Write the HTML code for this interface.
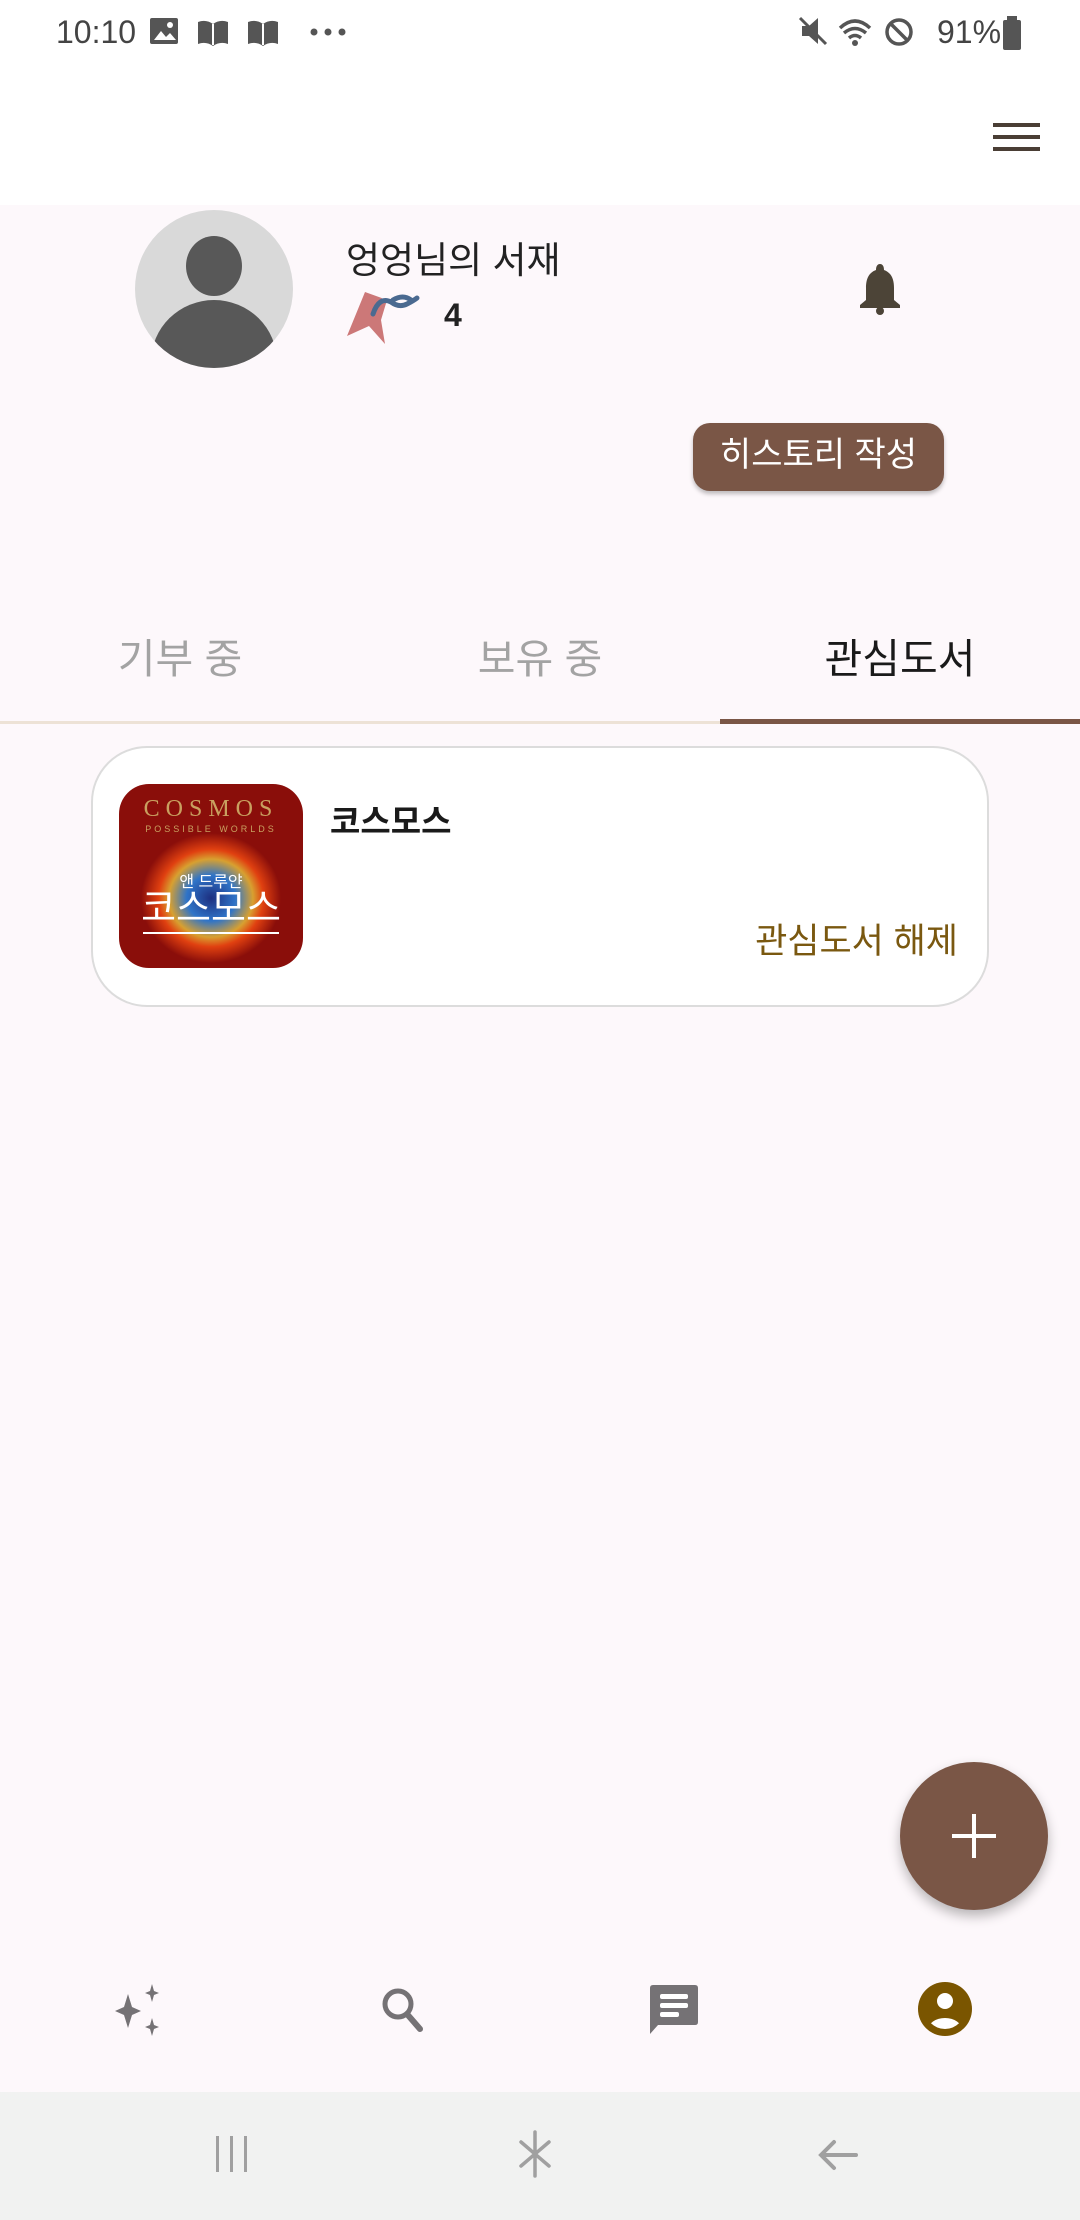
<!DOCTYPE html>
<html><head><meta charset="utf-8"><style>
*{margin:0;padding:0;box-sizing:border-box}
body{width:1080px;height:2220px;background:#fdf8fb;font-family:"Liberation Sans","Noto Sans CJK KR",sans-serif;position:relative;overflow:hidden}
.abs{position:absolute}
</style></head><body>
<div class="abs" style="left:0;top:0;width:1080px;height:205px;background:#fff"></div>
<div class="abs" style="left:56px;top:14px;font-size:32px;color:#444">10:10</div>
<svg class="abs" style="left:146px;top:14px" width="210" height="36" viewBox="0 0 210 36">
<rect x="4" y="4" width="28" height="26" rx="2" fill="#555"/><path d="M8 26l7-9 5 6 4-4 6 7z" fill="#fff"/><circle cx="24" cy="11" r="3" fill="#fff"/>
<path d="M52 8q8-3 15 2q7-5 15-2v22q-8-3-15 2q-7-5-15-2z" fill="#555"/><path d="M67 10v21" stroke="#fff" stroke-width="2"/>
<path d="M102 8q8-3 15 2q7-5 15-2v22q-8-3-15 2q-7-5-15-2z" fill="#555"/><path d="M117 10v21" stroke="#fff" stroke-width="2"/>
<circle cx="168" cy="18" r="3.5" fill="#555"/><circle cx="182" cy="18" r="3.5" fill="#555"/><circle cx="196" cy="18" r="3.5" fill="#555"/>
</svg>
<svg class="abs" style="left:796px;top:12px" width="120" height="40" viewBox="0 0 120 40">
<path d="M6 14h7l9-8v26l-9-8H6z" fill="#555"/><path d="M4 6l26 26" stroke="#555" stroke-width="3"/>
<path d="M44 16q15-14 30 0M48 21q11-9 22 0M53 26q6-5 12 0" stroke="#555" stroke-width="3.5" fill="none"/><circle cx="59" cy="31" r="3" fill="#555"/>
<circle cx="113" cy="20" r="12" stroke="#555" stroke-width="3.5" fill="none" transform="translate(-10 0)"/><path d="M95 12l16 16" stroke="#555" stroke-width="3.5"/>
</svg>
<div class="abs" style="left:937px;top:14px;font-size:32px;color:#444">91%</div>
<div class="abs" style="left:1003px;top:20px;width:18px;height:30px;background:#555;border-radius:2px"></div>
<div class="abs" style="left:1007px;top:16px;width:10px;height:5px;background:#555"></div>
<div class="abs" style="left:993px;top:123px;width:47px;height:4px;background:#4a3e35"></div>
<div class="abs" style="left:993px;top:135px;width:47px;height:4px;background:#4a3e35"></div>
<div class="abs" style="left:993px;top:147px;width:47px;height:4px;background:#4a3e35"></div>

<svg class="abs" style="left:135px;top:210px" width="158" height="158" viewBox="0 0 158 158">
<defs><clipPath id="c"><circle cx="79" cy="79" r="79"/></clipPath></defs>
<circle cx="79" cy="79" r="79" fill="#d9d9d9"/>
<g clip-path="url(#c)" fill="#585858"><ellipse cx="79" cy="56" rx="28" ry="30"/><ellipse cx="79" cy="152" rx="63" ry="62"/></g>
</svg>
<div class="abs" style="left:346px;top:230px;font-size:37px;color:#222">엉엉님의 서재</div>
<svg class="abs" style="left:345px;top:288px" width="80" height="58" viewBox="0 0 80 58">
<path d="M20 4l22 8-6 20 4 24-16-18-22 10z" fill="#cc7878"/>
<path d="M28 26q6-18 18-12q8 6 16 2q6-3 10-6M48 12q10-6 18 0" stroke="#4a6a90" stroke-width="5" fill="none" stroke-linecap="round"/>
</svg>
<div class="abs" style="left:444px;top:297px;font-size:32px;font-weight:bold;color:#222">4</div>
<svg class="abs" style="left:856px;top:262px" width="48" height="54" viewBox="0 0 48 54">
<path d="M24 2c3 0 4 3 4 6c8 3 10 10 10 18v12l6 5v3H4v-3l6-5V26c0-8 2-15 10-18c0-3 1-6 4-6z" fill="#4c4437"/><circle cx="24" cy="49" r="4" fill="#4c4437"/>
</svg>
<div class="abs" style="left:693px;top:423px;width:251px;height:68px;background:#7a5646;border-radius:17px;box-shadow:0 3px 4px rgba(0,0,0,.25);color:#fff;font-size:34px;text-align:center;line-height:64px">히스토리 작성</div>

<div class="abs" style="left:0;top:625px;width:360px;text-align:center;font-size:41px;color:#a3a3a3">기부 중</div>
<div class="abs" style="left:360px;top:625px;width:360px;text-align:center;font-size:41px;color:#a3a3a3">보유 중</div>
<div class="abs" style="left:720px;top:625px;width:360px;text-align:center;font-size:41px;color:#1a1a1a">관심도서</div>
<div class="abs" style="left:0;top:721px;width:1080px;height:3px;background:#ede2d6"></div>
<div class="abs" style="left:720px;top:719px;width:360px;height:5px;background:#7a5646"></div>

<div class="abs" style="left:91px;top:746px;width:898px;height:261px;border:2px solid #dcdcdc;border-radius:56px;background:#fff"></div>
<div class="abs" style="left:119px;top:784px;width:184px;height:184px;border-radius:30px;overflow:hidden;background:radial-gradient(ellipse 70px 65px at 50% 62%,#1d2f80 0%,#2f74c8 35%,#d8a030 60%,#e04010 75%,#8a0e0a 100%);">
<div style="position:absolute;left:0;top:12px;width:184px;text-align:center;color:#c9a060;font-size:24px;letter-spacing:6px;font-family:'Liberation Serif',serif">COSMOS</div>
<div style="position:absolute;left:0;top:40px;width:184px;text-align:center;color:#c9a060;font-size:9px;letter-spacing:3px">POSSIBLE WORLDS</div>
<div style="position:absolute;left:0;top:84px;width:184px;text-align:center;color:#fff;font-size:16px">앤 드루얀</div>
<div style="position:absolute;left:0;top:102px;width:184px;text-align:center;color:#fff;font-size:38px;line-height:46px">코스모스</div>
<div style="position:absolute;left:24px;top:148px;width:136px;height:2px;background:#fff"></div>
</div>
<div class="abs" style="left:330px;top:795px;font-size:33px;font-weight:bold;color:#1a1a1a">코스모스</div>
<div class="abs" style="left:600px;top:913px;width:358px;text-align:right;font-size:35px;color:#7a5810">관심도서 해제</div>

<div class="abs" style="left:900px;top:1762px;width:148px;height:148px;border-radius:50%;background:#7a5646;box-shadow:0 6px 12px rgba(0,0,0,.28)"></div>
<div class="abs" style="left:952px;top:1834px;width:44px;height:4px;background:#fff"></div>
<div class="abs" style="left:972px;top:1814px;width:4px;height:44px;background:#fff"></div>

<svg class="abs" style="left:108px;top:1980px" width="60" height="60" viewBox="0 0 60 60">
<path d="M20 14l4 13 9 4-9 4-4 13-4-13-9-4 9-4z" fill="#757275"/>
<path d="M44 4l2 7 5 2-5 2-2 7-2-7-5-2 5-2z" fill="#757275"/>
<path d="M44 38l2 7 5 2-5 2-2 7-2-7-5-2 5-2z" fill="#757275"/>
</svg>
<svg class="abs" style="left:376px;top:1982px" width="56" height="56" viewBox="0 0 56 56">
<circle cx="22" cy="22" r="13" stroke="#757275" stroke-width="5" fill="none"/><path d="M31 32l13 15" stroke="#757275" stroke-width="6" stroke-linecap="round"/>
</svg>
<svg class="abs" style="left:646px;top:1982px" width="56" height="56" viewBox="0 0 56 56">
<path d="M4 6q0-3 3-3h42q3 0 3 3v34q0 3-3 3H12L4 52z" fill="#757275"/>
<rect x="14" y="12" width="28" height="5" rx="2" fill="#fff"/><rect x="14" y="21" width="28" height="5" rx="2" fill="#fff"/><rect x="14" y="30" width="19" height="5" rx="2" fill="#fff"/>
</svg>
<svg class="abs" style="left:918px;top:1982px" width="54" height="54" viewBox="0 0 54 54">
<defs><clipPath id="p"><circle cx="27" cy="27" r="20"/></clipPath></defs>
<circle cx="27" cy="27" r="27" fill="#7a5500"/>
<circle cx="27" cy="19" r="8" fill="#fff"/><g clip-path="url(#p)"><ellipse cx="27" cy="48" rx="17" ry="12" fill="#fff"/></g>
</svg>

<div class="abs" style="left:0;top:2092px;width:1080px;height:128px;background:#f1f2f1"></div>
<div class="abs" style="left:216px;top:2136px;width:3px;height:36px;background:#a0a0a0"></div>
<div class="abs" style="left:230px;top:2136px;width:3px;height:36px;background:#a0a0a0"></div>
<div class="abs" style="left:244px;top:2136px;width:3px;height:36px;background:#a0a0a0"></div>
<svg class="abs" style="left:515px;top:2130px" width="40" height="48" viewBox="0 0 40 48">
<path d="M20 2v44M6 12l28 24M34 12L6 36" stroke="#a0a0a0" stroke-width="3.5" stroke-linecap="round"/>
</svg>
<svg class="abs" style="left:816px;top:2138px" width="44" height="34" viewBox="0 0 44 34">
<path d="M40 17H6M18 4L5 17l13 13" stroke="#a0a0a0" stroke-width="4" fill="none" stroke-linecap="round"/>
</svg>
</body></html>
